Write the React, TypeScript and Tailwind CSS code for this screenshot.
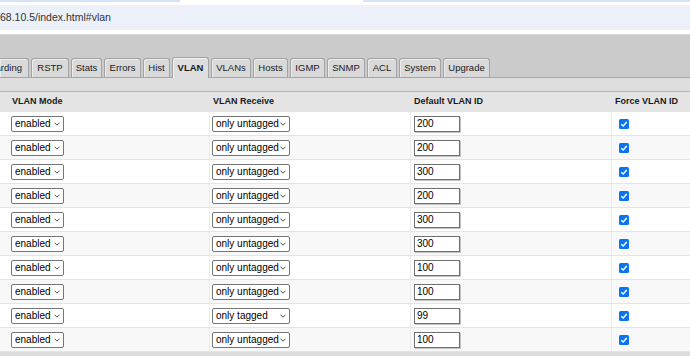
import { ReactNode } from "react";

interface Tab {
  label: string;
  width: string;
  active?: boolean;
  cut?: boolean;
}

interface PortRow {
  mode: string;
  receive: string;
  vlanId: string;
}

const tabs: Tab[] = [
  { label: "arding", width: "w-[29px]", cut: true },
  { label: "RSTP", width: "w-[38px]" },
  { label: "Stats", width: "w-[31px]" },
  { label: "Errors", width: "w-[37px]" },
  { label: "Hist", width: "w-[27px]" },
  { label: "VLAN", width: "w-[37px]", active: true },
  { label: "VLANs", width: "w-[40px]" },
  { label: "Hosts", width: "w-[35px]" },
  { label: "IGMP", width: "w-[35px]" },
  { label: "SNMP", width: "w-[38px]" },
  { label: "ACL", width: "w-[30px]" },
  { label: "System", width: "w-[42px]" },
  { label: "Upgrade", width: "w-[47px]" },
];

const rows: PortRow[] = [
  { mode: "enabled", receive: "only untagged", vlanId: "200" },
  { mode: "enabled", receive: "only untagged", vlanId: "200" },
  { mode: "enabled", receive: "only untagged", vlanId: "300" },
  { mode: "enabled", receive: "only untagged", vlanId: "200" },
  { mode: "enabled", receive: "only untagged", vlanId: "300" },
  { mode: "enabled", receive: "only untagged", vlanId: "300" },
  { mode: "enabled", receive: "only untagged", vlanId: "100" },
  { mode: "enabled", receive: "only untagged", vlanId: "100" },
  { mode: "enabled", receive: "only tagged", vlanId: "99" },
  { mode: "enabled", receive: "only untagged", vlanId: "100" },
];

function Chevron() {
  return (
    <svg
      width="6"
      height="4"
      viewBox="0 0 6 4"
      className="absolute right-[4px] top-[6px] pointer-events-none"
    >
      <path d="M0.5 0.7 L3 3.2 L5.5 0.7" fill="none" stroke="#3a3a3a" strokeWidth="0.9" />
    </svg>
  );
}

function Dropdown({ value, options, width }: { value: string; options: string[]; width: string }) {
  return (
    <div className="relative flex">
      <select
        defaultValue={value}
        className={`${width} h-[16px] appearance-none border border-[#767676] rounded-[2px] bg-white pl-[3px] py-0 text-[10px] leading-[14px] text-black outline-none`}
      >
        {options.map((o) => (
          <option key={o}>{o}</option>
        ))}
      </select>
      <Chevron />
    </div>
  );
}

function CheckMark() {
  return (
    <svg width="10" height="10" viewBox="0 0 10 10">
      <rect x="0" y="0" width="10" height="10" rx="1.5" fill="#0a75f0" />
      <path d="M2.3 5.2 L4.2 7 L7.7 2.9" fill="none" stroke="#fff" strokeWidth="1.5" />
    </svg>
  );
}

function Cell({ children, className = "" }: { children: ReactNode; className?: string }) {
  return <div className={`flex items-center h-full ${className}`}>{children}</div>;
}

export default function App() {
  return (
    <div className="w-[690px] h-[356px] overflow-hidden bg-white font-['Liberation_Sans',Arial,sans-serif] text-black">
      {/* browser chrome */}
      <div className="flex h-[2px]">
        <div className="w-[180px] bg-[#d4e3f7]" />
        <div className="w-[183px]" />
        <div className="flex-1 bg-[#d4e3f7]" />
      </div>
      <div className="h-[3px]" />
      <div className="h-[25px] bg-[#ebf0f9] flex items-center text-[10.5px] text-[#333]">
        68.10.5/index.html#vlan
      </div>
      <div className="h-[4px]" />
      <div className="h-px bg-[#dadada]" />

      {/* tabs */}
      <div className="h-[43px] bg-[#cbcbcb] border-b border-[#a6a6a6] flex items-end gap-[2px]">
        {tabs.map((tab) => (
          <div
            key={tab.label}
            className={`${tab.width} flex items-center text-[9.5px] text-[#1a1a1a] border-t border-r border-[#a3a3a3] rounded-tr-[3px] ${
              tab.cut ? "justify-end pr-[6px]" : "justify-center border-l rounded-tl-[3px]"
            } ${
              tab.active
                ? "h-[21px] -mb-px bg-[#dedede] font-bold shadow-[inset_1px_1px_0_#f2f2f2]"
                : "h-[19px] bg-[#d9d9d9] shadow-[inset_1px_1px_0_#ececec]"
            }`}
          >
            {tab.label}
          </div>
        ))}
      </div>
      <div className="h-[13px] bg-[#dedede]" />

      {/* table header */}
      <div className="h-[21px] border-t border-[#b4b4b4] bg-[#e4e4e4] grid grid-cols-[209px_201px_201px_1fr] text-[9px] font-bold text-[#1a1a1a]">
        <Cell className="pl-[12px]">VLAN Mode</Cell>
        <Cell className="pl-[4px]">VLAN Receive</Cell>
        <Cell className="pl-[4px]">Default VLAN ID</Cell>
        <Cell className="pl-[4px]">Force VLAN ID</Cell>
      </div>

      {/* rows */}
      {rows.map((row, i) => (
        <div
          key={i}
          className={`h-[24px] border-b border-[#e4e4e4] grid grid-cols-[209px_201px_201px_1fr] ${
            i % 2 === 1 ? "bg-[#f8f8f8]" : "bg-white"
          }`}
        >
          <Cell className="pl-[11px]">
            <Dropdown value={row.mode} options={["enabled", "disabled"]} width="w-[53px]" />
          </Cell>
          <Cell className="pl-[2px] border-l border-[#ececec]">
            <Dropdown
              value={row.receive}
              options={["only untagged", "only tagged", "any"]}
              width="w-[78px]"
            />
          </Cell>
          <Cell className="pl-[3px] border-l border-[#ececec]">
            <input
              type="text"
              defaultValue={row.vlanId}
              className="w-[46px] h-[16px] border border-[#6f6f6f] shadow-[1px_1px_0_#c4c4c4] bg-white pl-[2px] text-[10px] text-black outline-none"
            />
          </Cell>
          <Cell className="pl-[7px] border-l border-[#ececec]">
            <CheckMark />
          </Cell>
        </div>
      ))}
      <div className="h-[6px] bg-[#dcdcdc]" />
    </div>
  );
}
